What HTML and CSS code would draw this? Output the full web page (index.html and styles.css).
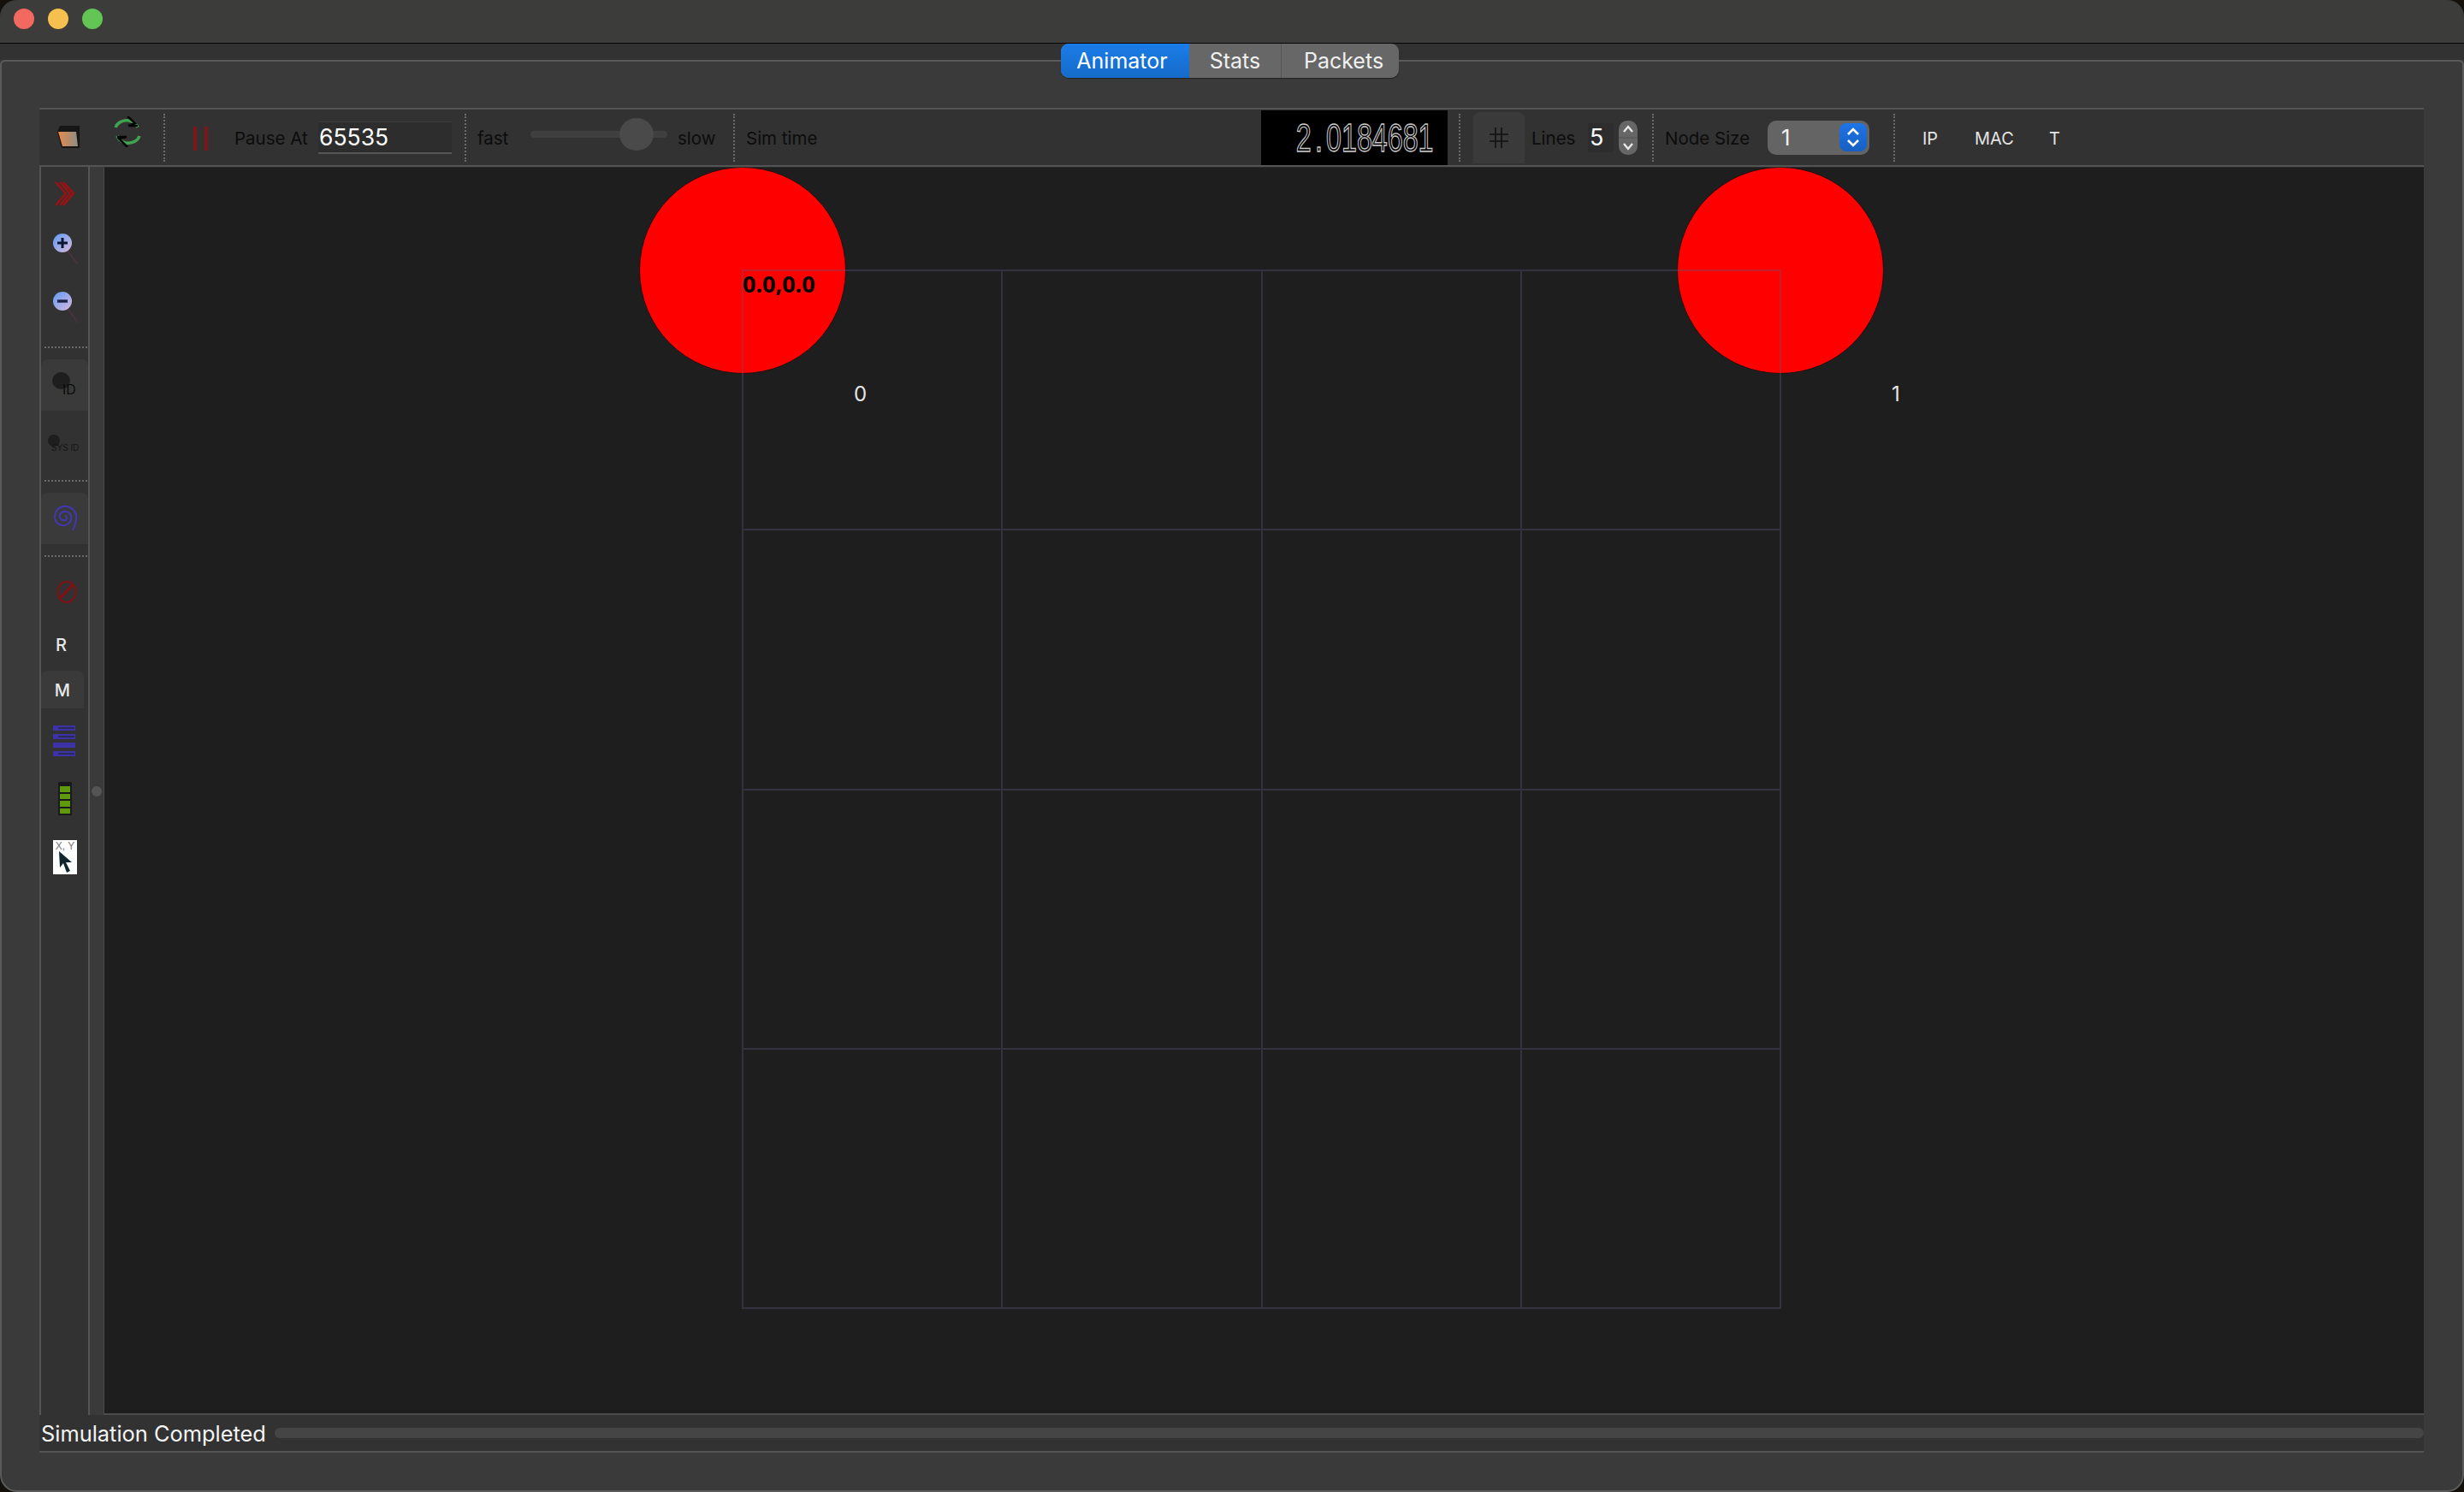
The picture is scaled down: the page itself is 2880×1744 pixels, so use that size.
FILE: index.html
```html
<!DOCTYPE html>
<html lang="en">
<head>
  <meta charset="UTF-8">
  <title>NetAnim</title>
  <link rel="stylesheet" href="styles.css">
</head>
<body>
  <div class="window">
    <div class="titlebar">
      <span class="light red"></span>
      <span class="light yellow"></span>
      <span class="light green"></span>
    </div>

    <div class="tabrow">
      <div class="tabs">
        <div class="tab tab-on">Animator</div>
        <div class="tab tab-stats">Stats</div>
        <div class="tab tab-packets">Packets</div>
      </div>
    </div>

    <div class="pane">
      <div class="toolbar">
        <svg class="ic-cup" width="28" height="28" viewBox="0 0 28 28">
          <defs>
            <linearGradient id="cup" x1="0" x2="1" y1="0" y2="0">
              <stop offset="0" stop-color="#e8894a"/>
              <stop offset="1" stop-color="#8d8d85"/>
            </linearGradient>
          </defs>
          <path d="M4 1H27V27H6L1 8Z" fill="#161616"/>
          <path d="M2 8H23L25 25H7Z" fill="url(#cup)"/>
        </svg>
        <svg class="ic-reload" width="32" height="36" viewBox="0 0 32 36" fill="none">
          <path d="M2 13C4 7 11 4 18 5 22 6 26 8 28 13" stroke="#3fa34f" stroke-width="3.5"/>
          <path d="M30 23C28 29 21 32 14 31 10 30 6 28 4 23" stroke="#3fa34f" stroke-width="3.5"/>
          <path d="M16 0 25 8 17 11M17 11H28" stroke="#050505" stroke-width="2.5"/>
          <path d="M16 36 6 26 15 24M15 24H4" stroke="#050505" stroke-width="2.5"/>
        </svg>
        <span class="sep sep-a"></span>
        <svg class="ic-pause" width="18" height="28" viewBox="0 0 18 28">
          <rect x="0" width="4" height="28" fill="#7c1618"/>
          <rect x="13" width="4" height="28" fill="#7c1618"/>
        </svg>
        <span class="label l-pause">Pause At</span>
        <div class="pause-input">65535</div>
        <span class="sep sep-b"></span>
        <span class="label l-fast">fast</span>
        <div class="slider"><span class="knob"></span></div>
        <span class="label l-slow">slow</span>
        <span class="sep sep-c"></span>
        <span class="label l-sim">Sim time</span>
        <div class="lcd"><span class="lcd-text">2<span class="lcd-dot">.</span>0184681</span></div>
        <span class="sep sep-d"></span>
        <div class="grid-btn">
          <svg width="24" height="26" viewBox="0 0 24 26" stroke="#111" stroke-width="1.6">
            <path d="M8 1V25M15 1V25M1 9H23M1 17H23"/>
          </svg>
        </div>
        <span class="label l-lines">Lines</span>
        <div class="spin-val">5</div>
        <div class="stepper">
          <svg width="22" height="40" viewBox="0 0 22 40" fill="none" stroke="#e8e8e8" stroke-width="2.4">
            <path d="M6 13 11 7 16 13M6 27 11 33 16 27"/>
            <path d="M0 20H22" stroke="#555" stroke-width="1"/>
          </svg>
        </div>
        <span class="sep sep-e"></span>
        <span class="label l-node">Node Size</span>
        <div class="combo">
          <span class="combo-val">1</span>
          <span class="combo-arrows">
            <svg width="32" height="33" viewBox="0 0 32 33" fill="none" stroke="#fff" stroke-width="2.6">
              <path d="M10 13 16 7 22 13M10 20 16 26 22 20"/>
            </svg>
          </span>
        </div>
        <span class="sep sep-f"></span>
        <span class="label light-text l-ip">IP</span>
        <span class="label light-text l-mac">MAC</span>
        <span class="label light-text l-t">T</span>
      </div>

      <div class="main">
        <div class="sidebar">
          <svg class="s-chev" width="24" height="30" viewBox="0 0 24 30" fill="none" stroke="#a80d0f" stroke-width="2">
            <path d="M1 1 13 14 1 28M6 1 18 14 6 28M10 1 22 14 10 28"/>
          </svg>
          <svg class="s-zoom-in" width="32" height="38" viewBox="0 0 32 38">
            <defs>
              <linearGradient id="lens" x1="0" x2="1" y1="0" y2="1">
                <stop offset="0" stop-color="#5f9bf5"/>
                <stop offset="1" stop-color="#d9b8dc"/>
              </linearGradient>
            </defs>
            <path d="M17 20 29 36" stroke="#4a3240" stroke-width="2"/>
            <circle cx="11" cy="11" r="11" fill="url(#lens)"/>
            <path d="M11 5V17M5 11H17" stroke="#0c1630" stroke-width="3"/>
          </svg>
          <svg class="s-zoom-out" width="32" height="38" viewBox="0 0 32 38">
            <path d="M17 20 29 36" stroke="#4a3240" stroke-width="2"/>
            <circle cx="11" cy="11" r="11" fill="url(#lens)"/>
            <path d="M5 11H17" stroke="#1a2440" stroke-width="3.4"/>
          </svg>
          <span class="hsep"></span>
          <div class="side-btn btn-id">
            <span class="blob"></span>
            <span class="id-text">ID</span>
          </div>
          <div class="side-btn btn-sys">
            <span class="blob blob-sm"></span>
            <span class="sys-text">SYS ID</span>
          </div>
          <span class="hsep hsep-2"></span>
          <div class="side-btn btn-spiral">
            <svg width="28" height="32" viewBox="0 0 28 32" fill="none" stroke="#4237b5" stroke-width="2">
              <path d="M22 30C25 24 27 18 26 12 24 4 17 1 11 2 5 3 1 8 1 14 1 21 7 25 13 24 18 23 21 18 20 13 19 9 15 7 11 8 8 9 6 12 7 15 8 18 11 19 14 18 16 16 15 13 13 13"/>
            </svg>
          </div>
          <span class="hsep hsep-3"></span>
          <svg class="s-forbid" width="24" height="26" viewBox="0 0 24 26" fill="none" stroke="#7f1216">
            <ellipse cx="12" cy="13" rx="10.5" ry="12" stroke-width="2"/>
            <path d="M3 21 20 4" stroke-width="3.4"/>
          </svg>
          <div class="side-letter s-r">R</div>
          <div class="side-letter s-m">M</div>
          <svg class="s-lines" width="26" height="37" viewBox="0 0 26 37" fill="#3e32a8">
            <path d="M0 0H26V6H0ZM0 10H26V16H0ZM0 20H26V26H0ZM0 30H26V36H0Z"/>
            <path d="M6 2H25V4H6ZM6 12H25V14H6ZM6 32H25V34H6Z" fill="#2c2a52"/>
          </svg>
          <div class="s-battery">
            <span></span><span></span><span></span><span></span>
          </div>
          <div class="s-xy">
            <span class="xy-text">X, Y</span>
            <svg width="18" height="26" viewBox="0 0 18 26">
              <path d="M2 0 3 19 7 14 11 25 15 23 10 13 17 13Z" fill="#10262c"/>
            </svg>
          </div>
        </div>
        <div class="strip"><span class="handle"></span></div>
        <div class="canvas">
          <div class="node node-0"></div>
          <div class="node node-1"></div>
          <div class="field">
            <div class="cell"></div><div class="cell"></div><div class="cell"></div><div class="cell"></div>
            <div class="cell"></div><div class="cell"></div><div class="cell"></div><div class="cell"></div>
            <div class="cell"></div><div class="cell"></div><div class="cell"></div><div class="cell"></div>
            <div class="cell"></div><div class="cell"></div><div class="cell"></div><div class="cell"></div>
          </div>
          <span class="origin">0.0,0.0</span>
          <span class="node-id id-0">0</span>
          <span class="node-id id-1">1</span>
        </div>
      </div>

      <div class="status">
        <span class="status-text">Simulation Completed</span>
        <div class="progress"></div>
      </div>
    </div>
  </div>
</body>
</html>
```

FILE: styles.css
```css
* {
  box-sizing: border-box;
}
html, body {
  margin: 0;
  height: 100%;
  background: #14100c;
}
body {
  font-family: Inter, "Liberation Sans", sans-serif;
  overflow: hidden;
}
.window {
  width: 2880px;
  height: 1744px;
  display: flex;
  flex-direction: column;
  border-radius: 20px;
  overflow: hidden;
  background: #3a3a3a;
}

/* title bar */
.titlebar {
  height: 51px;
  flex: none;
  display: flex;
  align-items: flex-start;
  gap: 16px;
  padding: 10px 0 0 16px;
  background: #3c3c3b;
  border-bottom: 1px solid #050505;
}
.light {
  width: 24px;
  height: 24px;
  border-radius: 50%;
}
.red { background: #f4695f; }
.yellow { background: #f6c04f; }
.green { background: #62c554; }

/* tabs */
.tabrow {
  height: 19px;
  flex: none;
  display: flex;
  justify-content: center;
  padding-right: 5px;
  background: #323232;
}
.tabs {
  display: flex;
  height: 40px;
  position: relative;
  z-index: 2;
  border-radius: 9px;
  overflow: hidden;
  background: #676767;
  box-shadow: 0 1px 1px #222;
  font-size: 25px;
  color: #f0f0f0;
}
.tab {
  display: flex;
  align-items: center;
  justify-content: center;
}
.tab-on {
  width: 150px;
  padding-right: 7px;
  background: linear-gradient(#1b7ce8, #156bc9);
  color: #fff;
}
.tab-stats {
  width: 108px;
  border-right: 1px solid #555;
}
.tab-packets {
  width: 137px;
  padding-left: 8px;
}

/* pane */
.pane {
  flex: 1;
  display: flex;
  flex-direction: column;
  border: 2px solid #5a5a5a;
  border-radius: 6px 6px 20px 20px;
  padding: 54px 45px 44px 44px;
  background: #3a3a3a;
}

/* toolbar */
.toolbar {
  height: 69px;
  flex: none;
  display: flex;
  align-items: center;
  background: #323232;
  border-top: 2px solid #545454;
  border-bottom: 2px solid #545454;
}
.label {
  font-size: 20.5px;
  line-height: 26px;
  color: #0c0c0c;
  white-space: nowrap;
  padding-top: 2px;
}
.light-text { color: #e4e4e4; }
.sep {
  width: 0;
  height: 56px;
  border-left: 2px dotted #6a6a6a;
}
.ic-cup { margin-left: 20px; margin-top: -2px; }
.ic-reload { margin-left: 39px; margin-top: -14px; }
.sep-a { margin-left: 26px; }
.ic-pause { margin-left: 33px; margin-top: 2px; }
.l-pause { margin-left: 30px; width: 84px; }
.pause-input {
  margin-left: 14px;
  width: 156px;
  height: 38px;
  background: #2d2d2d;
  border-top: 1px solid #3a3a3a;
  border-bottom: 2px solid #555;
  color: #fff;
  font-size: 26.5px;
  line-height: 34px;
  padding-left: 1px;
}
.sep-b { margin-left: 15px; }
.l-fast { margin-left: 13px; width: 36px; }
.slider {
  margin-left: 26px;
  width: 160px;
  height: 8px;
  margin-top: -8px;
  position: relative;
  border-radius: 4px;
  background: #3f3f3f;
}
.knob {
  position: absolute;
  left: 104px;
  top: -15px;
  width: 40px;
  height: 38px;
  border-radius: 50%;
  background: #4a4a4a;
}
.l-slow { margin-left: 12px; width: 44px; }
.sep-c { margin-left: 21px; }
.l-sim { margin-left: 13px; width: 85px; }
.lcd {
  margin-left: 517px;
  width: 218px;
  height: 64px;
  background: #000;
  display: flex;
  align-items: center;
  justify-content: flex-end;
  padding-right: 17px;
  overflow: hidden;
}
.lcd-text {
  font-family: "Liberation Sans", sans-serif;
  font-size: 46px;
  line-height: 64px;
  white-space: nowrap;
  color: #000;
  -webkit-text-stroke: 1.4px #cacaca;
  transform: scaleX(0.7);
  transform-origin: right center;
}
.lcd-dot {
  padding: 0 6px;
}
.sep-d { margin-left: 13px; }
.grid-btn {
  margin-left: 15px;
  width: 60px;
  height: 60px;
  margin-top: 1px;
  display: flex;
  align-items: center;
  justify-content: center;
  background: #3a3a3a;
  border-radius: 8px 8px 0 0;
}
.l-lines { margin-left: 8px; width: 52px; }
.spin-val {
  margin-left: 14px;
  width: 30px;
  height: 34px;
  background: #2d2d2d;
  color: #fff;
  font-size: 27px;
  line-height: 34px;
  padding-left: 2px;
}
.stepper {
  margin-left: 6px;
  width: 22px;
  height: 40px;
  border-radius: 10px;
  background: #666;
  overflow: hidden;
}
.stepper svg { display: block; }
.sep-e { margin-left: 17px; }
.l-node { margin-left: 13px; width: 99px; }
.combo {
  margin-left: 21px;
  width: 119px;
  height: 40px;
  border-radius: 10px;
  background: #646464;
  display: flex;
  align-items: center;
  justify-content: space-between;
  padding: 0 3px 0 16px;
  color: #f0f0f0;
  font-size: 26px;
}
.combo-arrows {
  width: 32px;
  height: 33px;
  border-radius: 8px;
  background: linear-gradient(#1f74e6, #175fc2);
}
.combo-arrows svg { display: block; }
.sep-f { margin-left: 28px; }
.l-ip { margin-left: 32px; width: 18px; font-size: 20px; }
.l-mac { margin-left: 43px; width: 46px; font-size: 20px; }
.l-t { margin-left: 41px; font-size: 20px; }

/* left tool column */
.main {
  flex: 1;
  min-height: 0;
  display: flex;
}
.sidebar {
  width: 59px;
  flex: none;
  display: flex;
  flex-direction: column;
  align-items: flex-start;
  background: #323232;
  border-left: 2px solid #555;
  border-right: 2px solid #555;
}
.s-chev { margin: 17px 0 0 16px; flex: none; }
.s-zoom-in { margin: 31px 0 0 14px; flex: none; }
.s-zoom-out { margin: 30px 0 0 14px; flex: none; }
.hsep {
  width: 50px;
  height: 0;
  margin: 26px 0 0 4px;
  flex: none;
  border-top: 2px dotted #6a6a6a;
}
.side-btn {
  position: relative;
  width: 55px;
  height: 60px;
  flex: none;
}
.btn-id {
  margin-top: 13px;
  background: #3a3a3a;
  border-radius: 8px 8px 0 0;
}
.blob {
  position: absolute;
  left: 13px;
  top: 15px;
  width: 21px;
  height: 20px;
  border-radius: 50%;
  background: #1e1e1e;
}
.id-text {
  position: absolute;
  left: 25px;
  top: 25px;
  font-size: 16px;
  line-height: 20px;
  color: #0c0c0c;
}
.btn-sys { margin-top: 0; height: 65px; }
.blob-sm {
  left: 8px;
  top: 28px;
  width: 14px;
  height: 14px;
}
.sys-text {
  position: absolute;
  left: 12px;
  top: 35px;
  font-size: 10px;
  line-height: 16px;
  color: #161616;
  white-space: nowrap;
}
.hsep-2 { margin-top: 16px; }
.btn-spiral {
  margin-top: 13px;
  display: flex;
  justify-content: center;
  padding: 14px 0 0 3px;
  background: #3a3a3a;
  border-radius: 8px 8px 0 0;
}
.hsep-3 { margin-top: 13px; }
.s-forbid { margin: 28px 0 0 18px; flex: none; }
.side-letter {
  font-size: 20px;
  line-height: 24px;
  font-weight: 500;
  color: #e8e8e8;
  flex: none;
}
.s-r { margin: 37px 0 0 17px; }
.s-m {
  margin: 18px 0 0 0;
  width: 50px;
  height: 44px;
  line-height: 46px;
  text-align: center;
  background: #3a3a3a;
  border-radius: 8px 8px 0 0;
}
.s-lines { margin: 20px 0 0 14px; flex: none; }
.s-battery {
  margin: 29px 0 0 20px;
  width: 16px;
  height: 39px;
  flex: none;
  display: flex;
  flex-direction: column;
  gap: 2px;
  padding: 5px 2px 2px;
  background: #1a1a1a;
}
.s-battery span {
  flex: 1;
  background: #5f9a0c;
}
.s-xy {
  margin: 29px 0 0 14px;
  width: 28px;
  height: 40px;
  flex: none;
  background: #fff;
  display: flex;
  flex-direction: column;
}
.xy-text {
  font-family: "Liberation Sans", sans-serif;
  font-size: 12px;
  line-height: 14px;
  color: #777;
  text-align: center;
  white-space: nowrap;
}
.s-xy svg { margin: -1px 0 0 5px; flex: none; }

.strip {
  width: 16px;
  flex: none;
  display: flex;
  align-items: center;
  justify-content: center;
  background: #3a3a3a;
}
.handle {
  width: 12px;
  height: 12px;
  border-radius: 50%;
  background: #555;
}

.canvas {
  flex: 1;
  position: relative;
  overflow: hidden;
  background: #1e1e1e;
  border-top: 1px solid #2a2a2a;
  border-left: 1px solid #4a4a4a;
  border-bottom: 2px solid #4c4c4c;
}
.node {
  position: absolute;
  top: -1px;
  width: 242px;
  height: 242px;
  border-radius: 50%;
  background: #f00;
  border: 1px solid #1c1010;
}
.node-0 { left: 625px; }
.node-1 { left: 1838px; }
.field {
  position: absolute;
  left: 745px;
  top: 119px;
  width: 1215px;
  height: 1215px;
  display: grid;
  grid-template-columns: repeat(4, 1fr);
  grid-template-rows: repeat(4, 1fr);
  border-top: 2px solid rgba(90, 90, 130, 0.35);
  border-left: 2px solid rgba(90, 90, 130, 0.35);
}
.cell {
  border-right: 2px solid rgba(90, 90, 130, 0.35);
  border-bottom: 2px solid rgba(90, 90, 130, 0.35);
}
.origin {
  position: absolute;
  left: 746px;
  top: 119px;
  font-family: "Noto Sans", sans-serif;
  font-weight: 700;
  font-size: 27px;
  line-height: 34px;
  color: #000;
}
.node-id {
  position: absolute;
  top: 250px;
  font-size: 24px;
  line-height: 30px;
  color: #e6e6e6;
}
.id-0 { left: 876px; }
.id-1 { left: 2089px; }

/* status line */
.status {
  height: 44px;
  flex: none;
  display: flex;
  align-items: center;
  gap: 10px;
  padding-left: 2px;
  background: #323232;
  border-bottom: 2px solid #555;
}
.status-text {
  font-size: 25.4px;
  color: #f4f4f4;
  white-space: nowrap;
}
.progress {
  flex: 1;
  height: 12px;
  border-radius: 6px;
  background: #454545;
}
```
